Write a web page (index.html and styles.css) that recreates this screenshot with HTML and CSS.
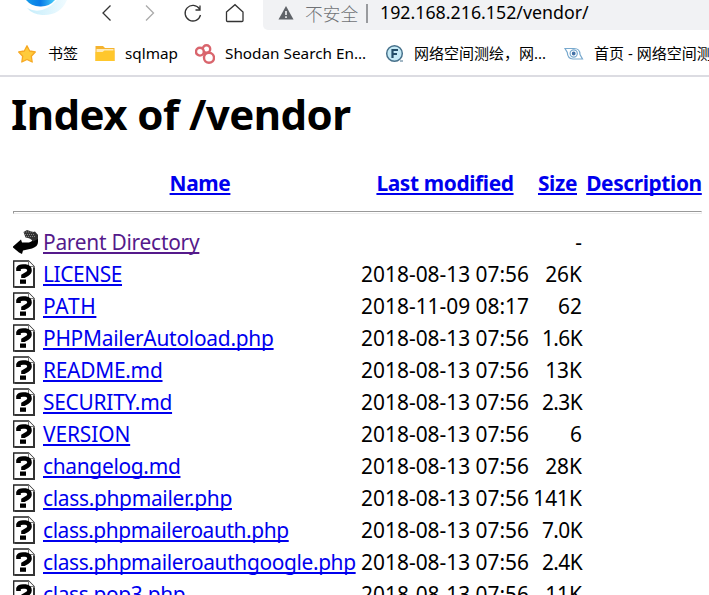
FILE: index.html
```html
<!DOCTYPE html>
<html lang="zh-CN">
<head>
<meta charset="utf-8">
<title>Index of /vendor</title>
<link rel="stylesheet" href="styles.css">
</head>
<body>
<svg class="defs" width="0" height="0" aria-hidden="true">
  <symbol id="unknown" viewBox="0 0 22 28">
    <path d="M.7 1H15.5L21 6.5V27H.7Z" fill="#fff" stroke="#222" stroke-width="1.3"/>
    <path d="M2 27H21V8" fill="none" stroke="#333" stroke-width="2"/>
    <path d="M15.5 1V6.5H21" fill="#fff" stroke="#777"/>
    <path d="M5.5 11V8.5Q6.5 6.5 10 6.5H12.5Q16.5 7 16.5 10.5Q16.5 12.5 14 14L10.5 16V18" fill="none" stroke="#000" stroke-width="4.6"/>
    <path d="M7 19.5H13V23.8H7Z"/>
  </symbol>
</svg>
<header class="chrome">
  <div class="toolbar">
    <svg class="brand" viewBox="0 0 90 28">
      <defs><linearGradient id="blue" x2="1"><stop stop-color="#159be9"/><stop offset=".5" stop-color="#087be8"/><stop offset="1" stop-color="#49cef8"/></linearGradient>
      <linearGradient id="pale" x2="1"><stop stop-color="#c5edfb"/><stop offset="1" stop-color="#f0fbff"/></linearGradient></defs>
      <path d="M27 8Q42 16 57 0H67Q60 16 42 15Q32 14 27 8Z" fill="url(#pale)"/>
      <path d="M26 0H55Q49 7 40 6.5Q31 6 26 0Z" fill="url(#blue)"/>
    </svg>
    <svg class="tools" viewBox="0 0 163 28" fill="none" stroke="#333" stroke-width="1.3">
      <path d="M20.5 5.5L13 13L20.5 20.5"/>
      <path d="M56 5.5L63.5 13L56 20.5" stroke="#aaa"/>
      <path d="M109.5 9A7.8 7.8 0 1 0 110.5 15M110 5.5V10H105.5"/>
      <path d="M136.5 12L145 4.7L153 12V20.5Q153 21.5 152 21.5H137.5Q136.5 21.5 136.5 20.5Z"/>
    </svg>
    <div class="address">
      <svg class="warning" viewBox="0 0 16 14"><path d="M8 0L15.5 13.5H.5Z" fill="#5f6368"/><path d="M8 5V9M8 10.3V12" stroke="#fff" stroke-width="1.5"/></svg>
      <span class="unsafe">不安全</span><i class="divider"></i><span class="url">192.168.216.152/vendor/</span>
    </div>
  </div>
  <nav class="bookmarks">
    <svg class="bi" viewBox="0 0 20 20"><path d="M10 1.8L12.7 7L18.3 8L14.3 12.2L15.2 18L10 15.5L4.8 18L5.7 12.2L1.7 8L7.3 7Z" fill="#ffcb3b" stroke="#f6a823" stroke-width="1.3" stroke-linejoin="round"/></svg><span class="b1">书签</span>
    <svg class="bi" viewBox="0 0 20 20"><path d="M.5 2H8L10 4H19.5V17H.5Z" fill="#f5b32e"/><path d="M1.5 5H18.5V8H1.5Z" fill="#ffebba"/><path d="M.5 8H7.5L9.5 6.5H19.5V17H.5Z" fill="#ffc72c"/></svg><span class="b2">sqlmap</span>
    <svg class="bi" viewBox="0 0 20 20" fill="#fff" stroke="#d9656d" stroke-width="2.4"><circle cx="11.5" cy="4.9" r="3.7"/><circle cx="4.9" cy="7.7" r="3.9"/><circle cx="14" cy="13.8" r="5"/><path d="M8.5 8.5L10.5 10.5" fill="none"/></svg><span class="b3">Shodan Search En...</span>
    <svg class="bi" viewBox="0 0 20 20"><circle cx="9.5" cy="9.5" r="7.8" fill="#c5eaf6" stroke="#47718b" stroke-width="1.5"/><path d="M7.5 14V6H13M7.5 10H12" fill="none" stroke="#244e69" stroke-width="2.2"/><path d="M15 17H18" stroke="#47718b"/></svg><span class="b4">网络空间测绘，网...</span>
    <svg class="bi" viewBox="0 0 20 20" fill="none" stroke="#78a9ce" stroke-width="1.2"><path d="M1 4.5H10Q16 4.5 16 10.5L18.5 15H9Q3.5 14.5 3.3 8.5Z"/><circle cx="9.7" cy="9.5" r="3.6"/><circle cx="9.7" cy="9.5" r="1.3" fill="#416fa5" stroke="#416fa5"/></svg><span class="b5">首页 - 网络空间测</span>
  </nav>
</header>
<main>
  <h1>Index of /vendor</h1>
  <div class="row headings"><i></i><div><a href="#">Name</a></div><div><a href="#">Last modified</a></div><div><a href="#">Size</a></div><div><a href="#">Description</a></div></div>
  <hr>
  <div class="listing">
    <div class="row"><svg class="fileicon" viewBox="0 0 26 28"><path d="M0 18.5L8 11.5L9 14.5H16Q20 13.5 20 10L25 6.5V14Q25 18.5 19 20.5L10 22.5L9 26L6 24.5L0 19.5Z"/><path d="M10.5 4L14 2L20 4L22 3.5L25 7V11L20 13.5Q18 10 12.5 9.5Z" fill="#333"/><path d="M11 4H20M12 6.5H21M13 8.5H22" stroke="#999" stroke-width=".8" stroke-dasharray="1 1"/></svg><a class="name visited tight-25" href="#">Parent Directory</a><span></span><span class="size">-</span></div>
    <div class="row"><svg class="fileicon"><use href="#unknown"/></svg><a class="name tight-40" href="#">LICENSE</a><span class="date">2018-08-13 07:56</span><span class="size">26K</span></div>
    <div class="row"><svg class="fileicon"><use href="#unknown"/></svg><a class="name path" href="#">PATH</a><span class="date">2018-11-09 08:17</span><span class="size">62</span></div>
    <div class="row"><svg class="fileicon"><use href="#unknown"/></svg><a class="name tight-25" href="#">PHPMailerAutoload.php</a><span class="date">2018-08-13 07:56</span><span class="size decimal">1.6K</span></div>
    <div class="row"><svg class="fileicon"><use href="#unknown"/></svg><a class="name tight-25" href="#">README.md</a><span class="date">2018-08-13 07:56</span><span class="size">13K</span></div>
    <div class="row"><svg class="fileicon"><use href="#unknown"/></svg><a class="name tight-25" href="#">SECURITY.md</a><span class="date">2018-08-13 07:56</span><span class="size decimal">2.3K</span></div>
    <div class="row"><svg class="fileicon"><use href="#unknown"/></svg><a class="name tight-10" href="#">VERSION</a><span class="date">2018-08-13 07:56</span><span class="size">6</span></div>
    <div class="row"><svg class="fileicon"><use href="#unknown"/></svg><a class="name tight-30" href="#">changelog.md</a><span class="date">2018-08-13 07:56</span><span class="size">28K</span></div>
    <div class="row"><svg class="fileicon"><use href="#unknown"/></svg><a class="name tight-30" href="#">class.phpmailer.php</a><span class="date">2018-08-13 07:56</span><span class="size">141K</span></div>
    <div class="row"><svg class="fileicon"><use href="#unknown"/></svg><a class="name tight-40" href="#">class.phpmaileroauth.php</a><span class="date">2018-08-13 07:56</span><span class="size decimal">7.0K</span></div>
    <div class="row"><svg class="fileicon"><use href="#unknown"/></svg><a class="name tight-36" href="#">class.phpmaileroauthgoogle.php</a><span class="date">2018-08-13 07:56</span><span class="size decimal">2.4K</span></div>
    <div class="row"><svg class="fileicon"><use href="#unknown"/></svg><a class="name tight-36" href="#">class.pop3.php</a><span class="date">2018-08-13 07:56</span><span class="size">11K</span></div>
  </div>
</main>
</body>
</html>
```
FILE: styles.css
```css
* { box-sizing: border-box; }
body { margin: 0; width: 709px; height: 595px; overflow: hidden; background: #fff; color: #000; font-family: "Noto Sans", "Noto Sans CJK SC", sans-serif; }
.defs { display: block; height: 0; }
.chrome { height: 77px; border-bottom: 2px solid #dcdce2; }
.toolbar { display: flex; height: 30px; }
.brand { width: 90px; height: 28px; flex: none; }
.tools { width: 163px; height: 28px; flex: none; }
.address { margin-left: 10px; width: 446px; height: 30px; flex: none; display: flex; align-items: center; background: #f1f2f4; border-radius: 0 0 0 5px; padding: 0 0 4px 15px; white-space: nowrap; }
.warning { width: 16px; height: 14px; }
.unsafe { margin-left: 11px; width: 54px; font: 17.7px "Noto Sans CJK SC", sans-serif; font-weight: 300; color: #707276; }
.divider { width: 2px; height: 19px; margin-left: 7px; background: #999b9e; }
.url { margin-left: 12px; font-size: 17.8px; letter-spacing: 0; position: relative; top: -1px; }
.bookmarks { height: 45px; display: flex; align-items: center; padding: 2px 0 0 17px; font-size: 15.3px; white-space: nowrap; overflow: hidden; }
.bookmarks span { flex: none; padding-bottom: 2px; }
.bi { width: 20px; height: 20px; flex: none; }
.b1 { margin-left: 11px; width: 47px; font-size: 15px; }
.b2 { margin-left: 10px; width: 70px; }
.b3 { margin-left: 10px; width: 160px; }
.b4 { margin-left: 9px; width: 150px; font-size: 15px; }
.b5 { margin-left: 10px; font-size: 15px; }
main { padding-left: 13px; }
h1 { margin: 0 0 0 -2px; height: 76px; line-height: 74px; font-size: 42px; letter-spacing: -.56px; white-space: nowrap; }
a { color: #00e; text-decoration: underline; text-decoration-thickness: 1.5px; text-underline-offset: 2px; text-decoration-skip-ink: none; }
.row { display: grid; grid-template-columns: 26px 314px 168px 49px 116px; column-gap: 4px; height: 32px; align-items: center; line-height: 32px; font-size: 20.9px; white-space: nowrap; }
.headings { height: 58px; padding-top: 2px; font-weight: 700; text-align: center; letter-spacing: -.38px; }
hr { margin: 0; width: 689px; height: 3px; border: 1px solid #999; border-right-color: #eee; border-bottom-color: #eee; }
.listing { padding-top: 12px; }
.fileicon { width: 22px; height: 28px; }
.row:first-child .fileicon { width: 26px; }
.name { justify-self: start; }
.visited { color: #551a8b; }
.date { text-align: right; }
.size { text-align: right; }
.decimal { letter-spacing: -.6px; }
.path { letter-spacing: .7px; }
.tight-10 { letter-spacing: -.1px; }
.tight-25 { letter-spacing: -.25px; }
.tight-30 { letter-spacing: -.3px; }
.tight-36 { letter-spacing: -.36px; }
.tight-40 { letter-spacing: -.4px; }
```
